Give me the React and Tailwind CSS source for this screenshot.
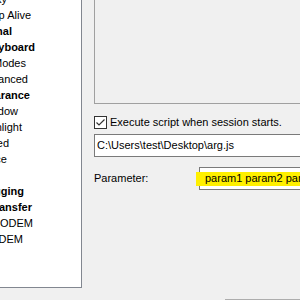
const treeRows = [
  { label: "Sticky", end: 7 },
  { label: "Keep Alive", end: 31 },
  { label: "Terminal", end: 12, bold: true },
  { label: "Keyboard", end: 35, bold: true },
  { label: "Input Modes", end: 26 },
  { label: "Advanced", end: 28 },
  { label: "Appearance", end: 30, bold: true },
  { label: "Window", end: 18 },
  { label: "Highlight", end: 22 },
  { label: "Extended", end: 9 },
  { label: "Space", end: 7 },
  { label: "", end: 0 },
  { label: "Logging", end: 24, bold: true },
  { label: "File Transfer", end: 32, bold: true },
  { label: "XMODEM", end: 33 },
  { label: "ZMODEM", end: 23 },
];

export default function App() {
  return (
    <div
      className="w-[300px] h-[300px] overflow-hidden bg-[#f0f0f0] text-[11px] text-black flex flex-col"
      style={{ fontFamily: '"Liberation Sans", Arial, sans-serif' }}
    >
      <div className="flex">
        {/* settings tree */}
        <div className="w-[82px] h-[288px] shrink-0 bg-white border-r border-b border-[#828790] overflow-hidden">
          <div className="-mt-[9px] flex flex-col">
            {treeRows.map((r, i) => (
              <div
                key={i}
                className={`h-[16px] flex items-center justify-end whitespace-nowrap ${r.bold ? "font-bold" : ""}`}
                style={{ width: r.end }}
              >
                {r.label}
              </div>
            ))}
          </div>
        </div>

        {/* script options */}
        <div className="ml-[12px] w-[240px] shrink-0 flex flex-col">
          <div className="h-[104px] border-l border-b border-[#a0a0a0]" />

          <label className="mt-[12px] flex items-center h-[13px]">
            <span className="w-[13px] h-[13px] shrink-0 border border-[#333333] bg-white flex items-center justify-center">
              <svg width="11" height="11" viewBox="0 0 11 11" fill="none">
                <path d="M1.5 5.5 L4 8 L9.5 2.5" stroke="#333333" strokeWidth="1.2" />
              </svg>
            </span>
            <span className="ml-[3px] whitespace-nowrap">Execute script when session starts.</span>
          </label>

          <div className="mt-[5px] h-[23px] border border-[#7a7a7a] bg-white flex items-center pl-[2px] whitespace-nowrap">
            C:\Users\test\Desktop\arg.js
          </div>

          <div className="mt-[10px] flex items-center">
            <span className="w-[105px] shrink-0 whitespace-nowrap">Parameter:</span>
            <div className="flex-1 min-w-0 h-[23px] border border-[#7a7a7a] bg-white flex items-center">
              <span className="-ml-[4px] pl-[9px] pr-[40px] h-[14px] shrink-0 flex items-center bg-[#fff000] whitespace-nowrap">
                param1 param2 param3
              </span>
            </div>
          </div>
        </div>
      </div>

      <div className="mt-[11px] ml-[225px] h-[20px] border-t border-[#adadad]" />
    </div>
  );
}
